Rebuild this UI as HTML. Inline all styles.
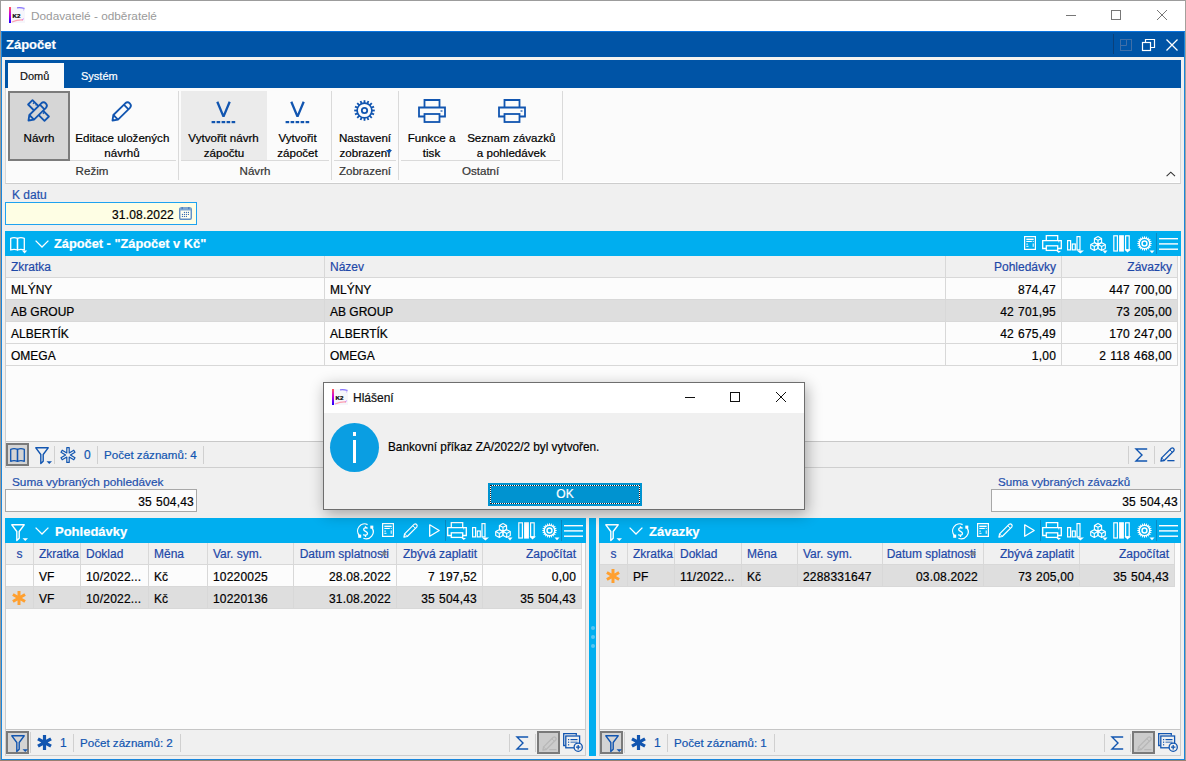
<!DOCTYPE html>
<html><head><meta charset="utf-8">
<style>
*{box-sizing:border-box}
html,body{margin:0;padding:0}
body{width:1186px;height:761px;position:relative;overflow:hidden;background:#f0f0f0;font-family:"Liberation Sans",sans-serif;font-size:12px;color:#000}
.a{position:absolute}
.t{position:absolute;white-space:nowrap;line-height:14px;-webkit-text-stroke:0.2px currentColor}
.r{text-align:right}
.n{letter-spacing:0.2px;word-spacing:0.6px}
.lbl{color:#1f51ad}
.hd{color:#1e48a8}
svg{position:absolute;overflow:visible}
</style></head><body>

<!-- desktop edges / window borders -->
<div class="a" style="left:0;top:0;width:1186px;height:1px;background:#9c9c9c"></div>
<div class="a" style="left:0;top:0;width:1px;height:761px;background:#a09a94"></div><div class="a" style="left:0;top:0;width:1px;height:31px;background:#9c9c9c"></div>
<div class="a" style="left:1185px;top:0;width:1px;height:761px;background:#a4a09c"></div>
<div class="a" style="left:0;top:760px;width:1186px;height:1px;background:#9a8070"></div>

<!-- outer title bar -->
<div class="a" style="left:1px;top:1px;width:1184px;height:30px;background:#fff"></div>
<svg style="left:9px;top:7px" width="16" height="16" viewBox="0 0 16 16"><defs><linearGradient id="k2g1" x1="0" y1="0" x2="0" y2="1"><stop offset="0" stop-color="#ff5a5a"/><stop offset="0.45" stop-color="#d000d8"/><stop offset="1" stop-color="#1a00ff"/></linearGradient></defs><rect x="0" y="0" width="16" height="16" fill="#f6f6fb"/><rect x="0" y="0" width="2" height="16" fill="url(#k2g1)"/><path d="M8 0.8Q12 0.3 15.5 1.5" stroke="#6a50ff" stroke-width="1.3" fill="none" opacity="0.8"/><path d="M15.3 2.5L14 3.2" stroke="#9a70ff" stroke-width="1" opacity="0.6"/><path d="M3 15Q9 12.5 14 13" stroke="#ff7a90" stroke-width="1.3" fill="none" opacity="0.7"/><path d="M14.5 11.5L13.5 13" stroke="#c060ff" stroke-width="1" opacity="0.7"/><text x="3.6" y="10.5" font-family="Liberation Sans" font-weight="700" font-size="6.2" fill="#000" stroke="#000" stroke-width="0.2">K2</text></svg>
<div class="t" style="left:31px;top:9px;color:#9a9a9a;font-size:11.8px;-webkit-text-stroke:0">Dodavatelé - odběratelé</div>
<div class="a" style="left:1066px;top:15px;width:10px;height:1px;background:#777"></div>
<div class="a" style="left:1111px;top:10px;width:10px;height:10px;border:1px solid #777"></div>
<svg style="left:1157px;top:10px" width="10" height="10"><path d="M0 0L10 10M10 0L0 10" stroke="#777" stroke-width="1"/></svg>

<!-- MDI child frame -->
<div class="a" style="left:1px;top:31px;width:1184px;height:729px;background:#1a86dc"></div>
<div class="a" style="left:2px;top:31px;width:1182px;height:728px;background:#f0f0f0"></div>
<div class="a" style="left:2px;top:31px;width:1182px;height:26px;background:#0054a6"></div>
<div class="a" style="left:1px;top:31px;width:1184px;height:1px;background:#0a74e0"></div>
<div class="t" style="left:6px;top:38px;color:#fff;font-weight:700;font-size:13px">Zápočet</div>
<div class="a" style="left:1113px;top:34px;width:1px;height:20px;background:#0a407a"></div>
<svg style="left:1120px;top:39px" width="12" height="12"><rect x="0.5" y="0.5" width="11" height="11" fill="none" stroke="#3f6fa8"/><path d="M6.5 0.5V6.5H0.5" fill="none" stroke="#3f6fa8"/></svg>
<svg style="left:1142px;top:39px" width="13" height="12"><rect x="0.5" y="3.5" width="8" height="8" fill="none" stroke="#fff" stroke-width="1.2"/><path d="M3.5 3.5V0.5H12.5V8.5H8.5" fill="none" stroke="#fff" stroke-width="1.2"/></svg>
<svg style="left:1166px;top:39px" width="12" height="12"><path d="M0.5 0.5L11.5 11.5M11.5 0.5L0.5 11.5" stroke="#fff" stroke-width="1.3"/></svg>

<div class="a" style="left:2px;top:57px;width:1182px;height:3px;background:#f5f3f0"></div>

<!-- ribbon -->
<div class="a" style="left:5px;top:60px;width:1176px;height:28px;background:#0054a6"></div>
<div class="a" style="left:8px;top:63px;width:56px;height:25px;background:#fbfbfb"></div>
<div class="t" style="left:20px;top:69px;color:#111;font-size:11px">Domů</div>
<div class="t" style="left:81px;top:69px;color:#fff;font-size:11px">Systém</div>
<div class="a" style="left:5px;top:88px;width:1176px;height:96px;background:#fbfbfb;border-left:1px solid #d8d8d8;border-right:1px solid #d8d8d8;border-bottom:1px solid #cdcdcd"></div>
<div class="a" style="left:6px;top:182px;width:1174px;height:1px;background:#fff"></div>

<!-- group separators -->
<div class="a" style="left:178px;top:91px;width:1px;height:89px;background:#dadada"></div>
<div class="a" style="left:331px;top:91px;width:1px;height:89px;background:#dadada"></div>
<div class="a" style="left:398px;top:91px;width:1px;height:89px;background:#dadada"></div>
<div class="a" style="left:562px;top:91px;width:1px;height:89px;background:#dadada"></div>
<div class="a" style="left:9px;top:160px;width:167px;height:1px;background:#dadada"></div>
<div class="a" style="left:181px;top:160px;width:148px;height:1px;background:#dadada"></div>
<div class="a" style="left:334px;top:160px;width:62px;height:1px;background:#dadada"></div>
<div class="a" style="left:401px;top:160px;width:159px;height:1px;background:#dadada"></div>

<!-- Návrh pressed -->
<div class="a" style="left:8px;top:91px;width:62px;height:70px;background:#d6d6d6;border:2px solid #7c7c7c"></div>
<svg style="left:27px;top:99px" width="24" height="24" viewBox="0 0 24 24" fill="none" stroke="#1155b0" stroke-width="1.8" stroke-linejoin="round">
 <path d="M5.5 1.1L1.1 5.5L17.5 21.9L21.9 17.5Z"/><path d="M7.6 3.2L6 4.8M9.7 5.3L8.6 6.4M15.4 11L14.3 12.1M17.5 13.1L15.9 14.7" stroke-width="1.3"/>
 <path d="M1.5 21.5L2.35 15.99L14.27 4.27A3.3 3.3 0 0 1 18.93 8.93L7.01 20.65Z" fill="#d6d6d6"/><path d="M12.86 5.68L17.52 10.34M2.35 15.99L7.01 20.65"/>
</svg>
<div class="t" style="left:-21.0px;top:131px;width:120px;text-align:center;font-size:11.6px">Návrh</div>

<!-- Editace -->
<svg style="left:111px;top:99px" width="24" height="24" viewBox="0 0 24 24" fill="none" stroke="#1155b0" stroke-width="1.8" stroke-linejoin="round">
 <path d="M1.5 21.5L2.35 15.99L14.27 4.27A3.3 3.3 0 0 1 18.93 8.93L7.01 20.65Z" fill="#fbfbfb"/><path d="M12.86 5.68L17.52 10.34M2.35 15.99L7.01 20.65"/>
</svg>
<div class="t" style="left:62.3px;top:131px;width:120px;text-align:center;font-size:11.6px">Editace uložených</div>
<div class="t" style="left:62.0px;top:146px;width:120px;text-align:center;font-size:11.6px">návrhů</div>
<div class="t" style="left:32.0px;top:164px;width:120px;text-align:center;font-size:11.6px;color:#333">Režim</div>

<!-- Vytvořit návrh zápočtu (hover) -->
<div class="a" style="left:181px;top:91px;width:86px;height:69px;background:#ebebeb"></div>
<svg style="left:211px;top:100px" width="25" height="25" viewBox="0 0 25 25"><path d="M6.3 1.8L12.5 16.6L18.7 1.8" fill="none" stroke="#1155b0" stroke-width="2.3" stroke-linejoin="bevel"/><rect x="0.6" y="21" width="3.6" height="2.2" fill="#1155b0"/><rect x="5.6" y="21" width="3.6" height="2.2" fill="#1155b0"/><rect x="10.6" y="21" width="3.6" height="2.2" fill="#1155b0"/><rect x="15.6" y="21" width="3.6" height="2.2" fill="#1155b0"/><rect x="20.6" y="21" width="3.6" height="2.2" fill="#1155b0"/></svg>
<div class="t" style="left:163.6px;top:131px;width:120px;text-align:center;font-size:11.6px">Vytvořit návrh</div>
<div class="t" style="left:164.0px;top:146px;width:120px;text-align:center;font-size:11.6px">zápočtu</div>
<svg style="left:285px;top:100px" width="25" height="25" viewBox="0 0 25 25"><path d="M6.3 1.8L12.5 16.6L18.7 1.8" fill="none" stroke="#1155b0" stroke-width="2.3" stroke-linejoin="bevel"/><rect x="0.6" y="21" width="3.6" height="2.2" fill="#1155b0"/><rect x="5.6" y="21" width="3.6" height="2.2" fill="#1155b0"/><rect x="10.6" y="21" width="3.6" height="2.2" fill="#1155b0"/><rect x="15.6" y="21" width="3.6" height="2.2" fill="#1155b0"/><rect x="20.6" y="21" width="3.6" height="2.2" fill="#1155b0"/></svg>
<div class="t" style="left:237.5px;top:131px;width:120px;text-align:center;font-size:11.6px">Vytvořit</div>
<div class="t" style="left:237.5px;top:146px;width:120px;text-align:center;font-size:11.6px">zápočet</div>
<div class="t" style="left:195.0px;top:164px;width:120px;text-align:center;font-size:11.6px;color:#333">Návrh</div>

<!-- Nastavení -->
<svg style="left:354px;top:100px" width="21" height="21" viewBox="0 0 21 21">
 <g fill="#1155b0"><rect x="9.6" y="0.2" width="1.8" height="3.2" transform="rotate(0.0 10.5 10.5)"/><rect x="9.6" y="0.2" width="1.8" height="3.2" transform="rotate(22.5 10.5 10.5)"/><rect x="9.6" y="0.2" width="1.8" height="3.2" transform="rotate(45.0 10.5 10.5)"/><rect x="9.6" y="0.2" width="1.8" height="3.2" transform="rotate(67.5 10.5 10.5)"/><rect x="9.6" y="0.2" width="1.8" height="3.2" transform="rotate(90.0 10.5 10.5)"/><rect x="9.6" y="0.2" width="1.8" height="3.2" transform="rotate(112.5 10.5 10.5)"/><rect x="9.6" y="0.2" width="1.8" height="3.2" transform="rotate(135.0 10.5 10.5)"/><rect x="9.6" y="0.2" width="1.8" height="3.2" transform="rotate(157.5 10.5 10.5)"/><rect x="9.6" y="0.2" width="1.8" height="3.2" transform="rotate(180.0 10.5 10.5)"/><rect x="9.6" y="0.2" width="1.8" height="3.2" transform="rotate(202.5 10.5 10.5)"/><rect x="9.6" y="0.2" width="1.8" height="3.2" transform="rotate(225.0 10.5 10.5)"/><rect x="9.6" y="0.2" width="1.8" height="3.2" transform="rotate(247.5 10.5 10.5)"/><rect x="9.6" y="0.2" width="1.8" height="3.2" transform="rotate(270.0 10.5 10.5)"/><rect x="9.6" y="0.2" width="1.8" height="3.2" transform="rotate(292.5 10.5 10.5)"/><rect x="9.6" y="0.2" width="1.8" height="3.2" transform="rotate(315.0 10.5 10.5)"/><rect x="9.6" y="0.2" width="1.8" height="3.2" transform="rotate(337.5 10.5 10.5)"/></g>
 <circle cx="10.5" cy="10.5" r="7.4" fill="none" stroke="#1155b0" stroke-width="1.7"/>
 <circle cx="10.5" cy="10.5" r="2.7" fill="none" stroke="#1155b0" stroke-width="1.8"/>
</svg>
<div class="t" style="left:305.0px;top:131px;width:120px;text-align:center;font-size:11.6px">Nastavení</div>
<div class="t" style="left:305.0px;top:146px;width:120px;text-align:center;font-size:11.6px">zobrazení</div>
<svg style="left:386px;top:150px" width="6" height="4"><path d="M0 0H6L3 4Z" fill="#1155b0"/></svg>
<div class="t" style="left:305.0px;top:164px;width:120px;text-align:center;font-size:11.6px;color:#333">Zobrazení</div>

<!-- printers -->
<svg style="left:418px;top:99px" width="28" height="24" viewBox="0 0 28 24" fill="none" stroke="#1155b0" stroke-width="1.8">
 <path d="M6.5 8.5V1H21.5V8.5"/><path d="M6.5 17.5H1V8.5H27V17.5H21.5"/><rect x="6.5" y="15" width="15" height="8"/><path d="M22.5 12h2" stroke-width="1.2"/>
</svg>
<div class="t" style="left:371.5px;top:131px;width:120px;text-align:center;font-size:11.6px">Funkce a</div>
<div class="t" style="left:371.5px;top:146px;width:120px;text-align:center;font-size:11.6px">tisk</div>
<svg style="left:498px;top:99px" width="28" height="24" viewBox="0 0 28 24" fill="none" stroke="#1155b0" stroke-width="1.8">
 <path d="M6.5 8.5V1H21.5V8.5"/><path d="M6.5 17.5H1V8.5H27V17.5H21.5"/><rect x="6.5" y="15" width="15" height="8"/><path d="M22.5 12h2" stroke-width="1.2"/>
</svg>
<div class="t" style="left:451.3px;top:131px;width:120px;text-align:center;font-size:11.6px">Seznam závazků</div>
<div class="t" style="left:451.3px;top:146px;width:120px;text-align:center;font-size:11.6px">a pohledávek</div>
<div class="t" style="left:420.6px;top:164px;width:120px;text-align:center;font-size:11.6px;color:#333">Ostatní</div>
<svg style="left:1166px;top:171px" width="10" height="6"><path d="M0.6 5.2L4.8 1.2L9 5.2" fill="none" stroke="#333" stroke-width="1.1"/></svg>

<!-- K datu -->
<div class="t lbl" style="left:12px;top:188px">K datu</div>
<div class="a" style="left:5px;top:202px;width:192px;height:23px;background:#fefee4;border:1px solid #1ea2f0"></div>
<div class="t r n" style="left:60px;top:208px;width:114px">31.08.2022</div>
<svg style="left:179px;top:207px" width="13" height="13" viewBox="0 0 13 13"><rect x="0.75" y="0.9" width="11.5" height="11.4" rx="1.3" fill="#fffff0" stroke="#5d8cc4" stroke-width="1.4"/><rect x="0.8" y="0.9" width="11.4" height="2.6" fill="#7ea6d2"/><rect x="2.6" y="0" width="1.2" height="2.2" fill="#4a7ab8"/><rect x="9.2" y="0" width="1.2" height="2.2" fill="#4a7ab8"/><g fill="#2f66b0"><circle cx="5.4" cy="5.4" r="0.6"/><circle cx="7.4" cy="5.4" r="0.6"/><circle cx="9.4" cy="5.4" r="0.6"/><circle cx="3.4" cy="7.4" r="0.6"/><circle cx="5.4" cy="7.4" r="0.6"/><circle cx="7.4" cy="7.4" r="0.6"/><circle cx="9.4" cy="7.4" r="0.6"/><circle cx="3.4" cy="9.4" r="0.6"/><circle cx="5.4" cy="9.4" r="0.6"/><circle cx="7.4" cy="9.4" r="0.6"/></g></svg>

<!-- Main panel -->
<div class="a" style="left:5px;top:231px;width:1176px;height:25px;background:#00aeef"></div>
<div class="t" style="left:54px;top:237px;color:#fff;font-weight:700;font-size:12.8px">Zápočet - "Zápočet v Kč"</div>
<div class="a" style="left:5px;top:256px;width:1176px;height:212px;background:#fcfcfc;border:1px solid #cfcfcf;border-top:0"></div>
<div class="a" style="left:6px;top:256px;width:1172px;height:21px;background:#f0f0f0"></div>
<div class="a" style="left:6px;top:277px;width:1172px;height:1px;background:#d8d8d8"></div>
<div class="a" style="left:6px;top:300px;width:1172px;height:21px;background:#dedede"></div>
<div class="a" style="left:6px;top:299px;width:1172px;height:1px;background:#d8d8d8"></div>
<div class="a" style="left:6px;top:321px;width:1172px;height:1px;background:#d8d8d8"></div>
<div class="a" style="left:6px;top:343px;width:1172px;height:1px;background:#d8d8d8"></div>
<div class="a" style="left:6px;top:365px;width:1172px;height:1px;background:#d8d8d8"></div>
<div class="a" style="left:324px;top:256px;width:1px;height:110px;background:#d8d8d8"></div>
<div class="a" style="left:945px;top:256px;width:1px;height:110px;background:#d8d8d8"></div>
<div class="a" style="left:1061px;top:256px;width:1px;height:110px;background:#d8d8d8"></div>
<div class="a" style="left:1177px;top:256px;width:1px;height:110px;background:#d8d8d8"></div>
<div class="t hd" style="left:11px;top:260px">Zkratka</div>
<div class="t hd" style="left:330px;top:260px">Název</div>
<div class="t hd r" style="left:946px;top:260px;width:110px">Pohledávky</div>
<div class="t hd r" style="left:1062px;top:260px;width:110px">Závazky</div>
<div class="t" style="left:11px;top:283px">MLÝNY</div><div class="t" style="left:330px;top:283px">MLÝNY</div>
<div class="t r n" style="left:946px;top:283px;width:110px">874,47</div><div class="t r n" style="left:1062px;top:283px;width:110px">447 700,00</div>
<div class="t" style="left:11px;top:305px">AB GROUP</div><div class="t" style="left:330px;top:305px">AB GROUP</div>
<div class="t r n" style="left:946px;top:305px;width:110px">42 701,95</div><div class="t r n" style="left:1062px;top:305px;width:110px">73 205,00</div>
<div class="t" style="left:11px;top:327px">ALBERTÍK</div><div class="t" style="left:330px;top:327px">ALBERTÍK</div>
<div class="t r n" style="left:946px;top:327px;width:110px">42 675,49</div><div class="t r n" style="left:1062px;top:327px;width:110px">170 247,00</div>
<div class="t" style="left:11px;top:349px">OMEGA</div><div class="t" style="left:330px;top:349px">OMEGA</div>
<div class="t r n" style="left:946px;top:349px;width:110px">1,00</div><div class="t r n" style="left:1062px;top:349px;width:110px">2 118 468,00</div>

<!-- main footer -->
<div class="a" style="left:5px;top:441px;width:1176px;height:27px;background:#f0f0f0;border:1px solid #cfcfcf;border-top-color:#c8c8c8"></div>
<div class="a" style="left:6px;top:443px;width:23px;height:23px;background:#d4d4d4;border:2px solid #7a7a7a"></div>
<div class="a" style="left:54px;top:446px;width:1px;height:18px;background:#d0d0d0"></div>
<div class="a" style="left:97px;top:446px;width:1px;height:18px;background:#d0d0d0"></div>
<div class="a" style="left:203px;top:446px;width:1px;height:18px;background:#d0d0d0"></div>
<div class="t" style="left:84px;top:448px;color:#1155b0">0</div>
<div class="t" style="left:104px;top:448px;color:#1155b0;font-size:11.6px">Počet záznamů: 4</div>
<div class="a" style="left:1128px;top:446px;width:1px;height:18px;background:#d0d0d0"></div>
<div class="a" style="left:1154px;top:446px;width:1px;height:18px;background:#d0d0d0"></div>

<!-- Suma -->
<div class="t lbl" style="left:12px;top:475px;font-size:11.8px">Suma vybraných pohledávek</div>
<div class="a" style="left:5px;top:489px;width:192px;height:23px;background:#fcfcfc;border:1px solid #a8a8a8"></div>
<div class="t r n" style="left:6px;top:495px;width:188px">35 504,43</div>
<div class="t lbl" style="left:998px;top:475px;font-size:11.6px">Suma vybraných závazků</div>
<div class="a" style="left:991px;top:489px;width:190px;height:23px;background:#fcfcfc;border:1px solid #a8a8a8"></div>
<div class="t r n" style="left:991px;top:495px;width:187px">35 504,43</div>

<!-- Pohledávky panel -->

<svg style="left:10px;top:237px;color:#fff;--bg:#00aeef" width="18" height="17" viewBox="0 0 18 17"><g fill="none" stroke="currentColor" stroke-width="1.3" stroke-linejoin="round"><path d="M0.7 1.3Q4 0 7.5 1.3V13Q4 11.8 0.7 13Z"/><path d="M7.5 1.3Q11 0 14.3 1.3V13Q11 11.8 7.5 13Z"/></g><path d="M12 13.6H17.2L14.6 16.4Z" fill="currentColor"/></svg>
<svg style="left:35px;top:240px;color:#fff;--bg:#00aeef" width="14" height="8" viewBox="0 0 14 8"><path d="M0.6 0.6L7 7L13.4 0.6" fill="none" stroke="currentColor" stroke-width="1.3"/></svg>
<svg style="left:1024px;top:236px;color:#fff;--bg:#00aeef" width="12" height="14" viewBox="0 0 12 14"><rect x="0.6" y="0.6" width="10.8" height="12.8" fill="none" stroke="currentColor" stroke-width="1.2"/><g fill="currentColor"><rect x="2.3" y="2.6" width="7.4" height="1.5"/><rect x="2.3" y="5" width="5.5" height="1"/><rect x="8.7" y="5" width="1" height="1"/><rect x="2.3" y="7.6" width="1.6" height="1"/><rect x="2.3" y="9.8" width="2.2" height="1"/><rect x="8.7" y="7.4" width="1" height="3.4"/></g></svg>
<svg style="left:1042px;top:235px;color:#fff;--bg:#00aeef" width="20" height="18" viewBox="0 0 20 18"><g fill="none" stroke="currentColor" stroke-width="1.3"><path d="M4.3 5.6V0.7H15.7V5.6"/><path d="M4.3 13.5H0.7V5.6H19.3V13.5H15.7"/><rect x="4.3" y="10.8" width="11.4" height="4.6"/></g><path d="M16 6.8h1.4" stroke="currentColor" stroke-width="0.8"/><path d="M14.5 16H19L16.75 18Z" fill="currentColor"/></svg>
<svg style="left:1067px;top:236px;color:#fff;--bg:#00aeef" width="18" height="18" viewBox="0 0 18 18"><g fill="none" stroke="currentColor" stroke-width="1.2"><rect x="0.6" y="4.6" width="3" height="9.3"/><rect x="5.3" y="8" width="3" height="5.9"/><rect x="10" y="0.6" width="3" height="13.3"/></g><path d="M9.8 14.6H17L13.4 17.6Z" fill="currentColor"/></svg>
<svg style="left:1090px;top:236px;color:#fff;--bg:#00aeef" width="18" height="18" viewBox="0 0 18 18"><g fill="none" stroke="currentColor" stroke-width="1.1" stroke-linejoin="round"><path d="M8 0.6L11.6 2.4V6.4L8 8.2L4.4 6.4V2.4Z M4.4 2.4L8 4.2L11.6 2.4 M8 4.2V8.2"/><path d="M4.3 6.8L7.9 8.6V12.6L4.3 14.4L0.7 12.6V8.6Z M0.7 8.6L4.3 10.4L7.9 8.6 M4.3 10.4V14.4"/><path d="M11.7 6.8L15.3 8.6V12.6L11.7 14.4L8.1 12.6V8.6Z M8.1 8.6L11.7 10.4L15.3 8.6 M11.7 10.4V14.4"/></g><path d="M12.5 14.6H17.5L15 17.4Z" fill="currentColor"/></svg>
<svg style="left:1113px;top:235px;color:#fff;--bg:#00aeef" width="19" height="18" viewBox="0 0 19 18"><g fill="none" stroke="currentColor" stroke-width="1.2"><rect x="0.8" y="0.8" width="3.6" height="15.2"/><rect x="12.6" y="0.8" width="3.6" height="14"/></g><rect x="6.1" y="0.2" width="4.8" height="16.4" fill="currentColor"/><path d="M11.5 14.6H18L14.4 17.6Z" fill="currentColor"/></svg>
<svg style="left:1137px;top:236px;color:#fff;--bg:#00aeef" width="19" height="18" viewBox="0 0 19 18"><g fill="currentColor"><rect x="7" y="0.3" width="1" height="2.4" transform="rotate(0 7.5 7.5)"/><rect x="7" y="0.3" width="1" height="2.4" transform="rotate(18 7.5 7.5)"/><rect x="7" y="0.3" width="1" height="2.4" transform="rotate(36 7.5 7.5)"/><rect x="7" y="0.3" width="1" height="2.4" transform="rotate(54 7.5 7.5)"/><rect x="7" y="0.3" width="1" height="2.4" transform="rotate(72 7.5 7.5)"/><rect x="7" y="0.3" width="1" height="2.4" transform="rotate(90 7.5 7.5)"/><rect x="7" y="0.3" width="1" height="2.4" transform="rotate(108 7.5 7.5)"/><rect x="7" y="0.3" width="1" height="2.4" transform="rotate(126 7.5 7.5)"/><rect x="7" y="0.3" width="1" height="2.4" transform="rotate(144 7.5 7.5)"/><rect x="7" y="0.3" width="1" height="2.4" transform="rotate(162 7.5 7.5)"/><rect x="7" y="0.3" width="1" height="2.4" transform="rotate(180 7.5 7.5)"/><rect x="7" y="0.3" width="1" height="2.4" transform="rotate(198 7.5 7.5)"/><rect x="7" y="0.3" width="1" height="2.4" transform="rotate(216 7.5 7.5)"/><rect x="7" y="0.3" width="1" height="2.4" transform="rotate(234 7.5 7.5)"/><rect x="7" y="0.3" width="1" height="2.4" transform="rotate(252 7.5 7.5)"/><rect x="7" y="0.3" width="1" height="2.4" transform="rotate(270 7.5 7.5)"/><rect x="7" y="0.3" width="1" height="2.4" transform="rotate(288 7.5 7.5)"/><rect x="7" y="0.3" width="1" height="2.4" transform="rotate(306 7.5 7.5)"/><rect x="7" y="0.3" width="1" height="2.4" transform="rotate(324 7.5 7.5)"/><rect x="7" y="0.3" width="1" height="2.4" transform="rotate(342 7.5 7.5)"/></g><circle cx="7.5" cy="7.5" r="5.3" fill="none" stroke="currentColor" stroke-width="1.5"/><circle cx="7.5" cy="7.5" r="2.45" fill="none" stroke="currentColor" stroke-width="1.5"/><path d="M12.5 14.5H17.5L15 17.3Z" fill="currentColor"/></svg>
<div class="a" style="left:1156px;top:233px;width:1px;height:21px;background:#0a8bc4"></div>
<svg style="left:1159px;top:238px;color:#fff;--bg:#00aeef" width="19" height="12" viewBox="0 0 19 12"><g fill="currentColor"><rect x="0" y="0" width="19" height="1.4"/><rect x="0" y="5.2" width="19" height="1.4"/><rect x="0" y="10.5" width="19" height="1.4"/></g></svg>
<svg style="left:10px;top:448px;color:#1155b0;--bg:#d4d4d4" width="16" height="15" viewBox="0 0 16 15"><g fill="none" stroke="currentColor" stroke-width="1.3" stroke-linejoin="round"><path d="M0.7 1.3Q4 0 7.5 1.3V13.3Q4 12 0.7 13.3Z"/><path d="M7.5 1.3Q11 0 14.3 1.3V13.3Q11 12 7.5 13.3Z"/></g></svg>
<svg style="left:35px;top:447px;color:#1155b0;--bg:#f0f0f0" width="18" height="18" viewBox="0 0 18 18"><path d="M0.8 0.8H13.2L8.2 7.5V14.2L5.8 16.5V7.5Z" fill="none" stroke="currentColor" stroke-width="1.4" stroke-linejoin="round"/><path d="M11.5 14.2H17L14.25 17Z" fill="currentColor"/></svg>
<svg style="left:60px;top:447px;color:#1155b0;--bg:#00aeef" width="16" height="16" viewBox="0 0 16 16"><g fill="none" stroke="currentColor" stroke-width="1.2" stroke-linejoin="round"><path d="M6.8 0.6H9.2V5.9L13.8 3.2L15 5.3L10.4 8L15 10.7L13.8 12.8L9.2 10.1V15.4H6.8V10.1L2.2 12.8L1 10.7L5.6 8L1 5.3L2.2 3.2L6.8 5.9Z"/></g></svg>
<svg style="left:1135px;top:448px;color:#1155b0;--bg:#00aeef" width="13" height="14" viewBox="0 0 13 14"><path d="M12.2 1H1L7 7L1 13H12.2" fill="none" stroke="currentColor" stroke-width="1.4" stroke-linejoin="miter"/></svg>
<svg style="left:1160px;top:447px;color:#1155b0;--bg:#00aeef" width="15" height="15" viewBox="0 0 15 15"><path d="M11.3 1.2a1.9 1.9 0 0 1 2.6 2.6L4.2 13.5L0.9 14.2L1.6 10.9Z" fill="none" stroke="currentColor" stroke-width="1.3" stroke-linejoin="round"/><path d="M9.8 2.7L12.4 5.3M1.6 10.9L4.2 13.5" fill="none" stroke="currentColor" stroke-width="1"/><rect x="7.3" y="13" width="7.2" height="1.3" fill="currentColor"/></svg>
<div class="a" style="left:5px;top:518px;width:581px;height:25px;background:#00aeef"></div>
<svg style="left:11px;top:524px;color:#fff;--bg:#00aeef" width="18" height="18" viewBox="0 0 18 18"><path d="M0.8 0.8H13.2L8.2 7.5V14.2L5.8 16.5V7.5Z" fill="none" stroke="currentColor" stroke-width="1.4" stroke-linejoin="round"/><path d="M11.5 14.2H17L14.25 17Z" fill="currentColor"/></svg>
<svg style="left:35px;top:527px;color:#fff;--bg:#00aeef" width="14" height="8" viewBox="0 0 14 8"><path d="M0.6 0.6L7 7L13.4 0.6" fill="none" stroke="currentColor" stroke-width="1.3"/></svg>
<div class="t" style="left:55px;top:525px;color:#fff;font-weight:700;font-size:13px">Pohledávky</div>
<svg style="left:356px;top:523px;color:#fff;--bg:#00aeef" width="19" height="19" viewBox="0 0 19 19"><g fill="none" stroke="currentColor" stroke-width="1.2"><path d="M11.6 1.6A7 7 0 0 0 3.4 12.6"/><path d="M7.4 15.2A7 7 0 0 0 15.8 4.6"/><path d="M11.6 5.4C10.6 4.4 7.5 4.5 7.7 6.6C7.9 8.6 11.5 8.1 11.5 10.4C11.5 12.5 8.4 12.6 7.3 11.5" stroke-width="1.3"/><path d="M9.5 3.2V5M9.5 12.1V13.9" stroke-width="1.3"/></g><path d="M2.2 11.6H5.2V14.8H2.2Z" fill="currentColor"/><path d="M14.3 2.6H17.3V5.6H14.3Z" fill="currentColor"/></svg>
<svg style="left:382px;top:523px;color:#fff;--bg:#00aeef" width="12" height="14" viewBox="0 0 12 14"><rect x="0.6" y="0.6" width="10.8" height="12.8" fill="none" stroke="currentColor" stroke-width="1.2"/><g fill="currentColor"><rect x="2.3" y="2.6" width="7.4" height="1.5"/><rect x="2.3" y="5" width="5.5" height="1"/><rect x="8.7" y="5" width="1" height="1"/><rect x="2.3" y="7.6" width="1.6" height="1"/><rect x="2.3" y="9.8" width="2.2" height="1"/><rect x="8.7" y="7.4" width="1" height="3.4"/></g></svg>
<svg style="left:403px;top:523px;color:#fff;--bg:#00aeef" width="15" height="15" viewBox="0 0 15 15"><path d="M11.3 1.2a1.9 1.9 0 0 1 2.6 2.6L4.2 13.5L0.9 14.2L1.6 10.9Z" fill="none" stroke="currentColor" stroke-width="1.2" stroke-linejoin="round"/><path d="M9.8 2.7L12.4 5.3M1.6 10.9L4.2 13.5" fill="none" stroke="currentColor" stroke-width="1"/></svg>
<svg style="left:429px;top:524px;color:#fff;--bg:#00aeef" width="11" height="13" viewBox="0 0 11 13"><path d="M0.7 0.8L10.2 6.5L0.7 12.2Z" fill="none" stroke="currentColor" stroke-width="1.3" stroke-linejoin="round"/></svg>
<div class="a" style="left:445px;top:520px;width:1px;height:21px;background:#0a8bc4"></div>
<svg style="left:447px;top:522px;color:#fff;--bg:#00aeef" width="20" height="18" viewBox="0 0 20 18"><g fill="none" stroke="currentColor" stroke-width="1.3"><path d="M4.3 5.6V0.7H15.7V5.6"/><path d="M4.3 13.5H0.7V5.6H19.3V13.5H15.7"/><rect x="4.3" y="10.8" width="11.4" height="4.6"/></g><path d="M16 6.8h1.4" stroke="currentColor" stroke-width="0.8"/><path d="M14.5 16H19L16.75 18Z" fill="currentColor"/></svg>
<svg style="left:472px;top:523px;color:#fff;--bg:#00aeef" width="18" height="18" viewBox="0 0 18 18"><g fill="none" stroke="currentColor" stroke-width="1.2"><rect x="0.6" y="4.6" width="3" height="9.3"/><rect x="5.3" y="8" width="3" height="5.9"/><rect x="10" y="0.6" width="3" height="13.3"/></g><path d="M9.8 14.6H17L13.4 17.6Z" fill="currentColor"/></svg>
<svg style="left:495px;top:523px;color:#fff;--bg:#00aeef" width="18" height="18" viewBox="0 0 18 18"><g fill="none" stroke="currentColor" stroke-width="1.1" stroke-linejoin="round"><path d="M8 0.6L11.6 2.4V6.4L8 8.2L4.4 6.4V2.4Z M4.4 2.4L8 4.2L11.6 2.4 M8 4.2V8.2"/><path d="M4.3 6.8L7.9 8.6V12.6L4.3 14.4L0.7 12.6V8.6Z M0.7 8.6L4.3 10.4L7.9 8.6 M4.3 10.4V14.4"/><path d="M11.7 6.8L15.3 8.6V12.6L11.7 14.4L8.1 12.6V8.6Z M8.1 8.6L11.7 10.4L15.3 8.6 M11.7 10.4V14.4"/></g><path d="M12.5 14.6H17.5L15 17.4Z" fill="currentColor"/></svg>
<svg style="left:518px;top:522px;color:#fff;--bg:#00aeef" width="19" height="18" viewBox="0 0 19 18"><g fill="none" stroke="currentColor" stroke-width="1.2"><rect x="0.8" y="0.8" width="3.6" height="15.2"/><rect x="12.6" y="0.8" width="3.6" height="14"/></g><rect x="6.1" y="0.2" width="4.8" height="16.4" fill="currentColor"/><path d="M11.5 14.6H18L14.4 17.6Z" fill="currentColor"/></svg>
<svg style="left:542px;top:523px;color:#fff;--bg:#00aeef" width="19" height="18" viewBox="0 0 19 18"><g fill="currentColor"><rect x="7" y="0.3" width="1" height="2.4" transform="rotate(0 7.5 7.5)"/><rect x="7" y="0.3" width="1" height="2.4" transform="rotate(18 7.5 7.5)"/><rect x="7" y="0.3" width="1" height="2.4" transform="rotate(36 7.5 7.5)"/><rect x="7" y="0.3" width="1" height="2.4" transform="rotate(54 7.5 7.5)"/><rect x="7" y="0.3" width="1" height="2.4" transform="rotate(72 7.5 7.5)"/><rect x="7" y="0.3" width="1" height="2.4" transform="rotate(90 7.5 7.5)"/><rect x="7" y="0.3" width="1" height="2.4" transform="rotate(108 7.5 7.5)"/><rect x="7" y="0.3" width="1" height="2.4" transform="rotate(126 7.5 7.5)"/><rect x="7" y="0.3" width="1" height="2.4" transform="rotate(144 7.5 7.5)"/><rect x="7" y="0.3" width="1" height="2.4" transform="rotate(162 7.5 7.5)"/><rect x="7" y="0.3" width="1" height="2.4" transform="rotate(180 7.5 7.5)"/><rect x="7" y="0.3" width="1" height="2.4" transform="rotate(198 7.5 7.5)"/><rect x="7" y="0.3" width="1" height="2.4" transform="rotate(216 7.5 7.5)"/><rect x="7" y="0.3" width="1" height="2.4" transform="rotate(234 7.5 7.5)"/><rect x="7" y="0.3" width="1" height="2.4" transform="rotate(252 7.5 7.5)"/><rect x="7" y="0.3" width="1" height="2.4" transform="rotate(270 7.5 7.5)"/><rect x="7" y="0.3" width="1" height="2.4" transform="rotate(288 7.5 7.5)"/><rect x="7" y="0.3" width="1" height="2.4" transform="rotate(306 7.5 7.5)"/><rect x="7" y="0.3" width="1" height="2.4" transform="rotate(324 7.5 7.5)"/><rect x="7" y="0.3" width="1" height="2.4" transform="rotate(342 7.5 7.5)"/></g><circle cx="7.5" cy="7.5" r="5.3" fill="none" stroke="currentColor" stroke-width="1.5"/><circle cx="7.5" cy="7.5" r="2.45" fill="none" stroke="currentColor" stroke-width="1.5"/><path d="M12.5 14.5H17.5L15 17.3Z" fill="currentColor"/></svg>
<div class="a" style="left:561px;top:520px;width:1px;height:21px;background:#0a8bc4"></div>
<svg style="left:564px;top:525px;color:#fff;--bg:#00aeef" width="19" height="12" viewBox="0 0 19 12"><g fill="currentColor"><rect x="0" y="0" width="19" height="1.4"/><rect x="0" y="5.2" width="19" height="1.4"/><rect x="0" y="10.5" width="19" height="1.4"/></g></svg>
<div class="a" style="left:5px;top:543px;width:581px;height:213px;background:#fcfcfc;border:1px solid #cdcdcd;border-top:0"></div>
<div class="a" style="left:6px;top:543px;width:576px;height:21px;background:#f0f0f0"></div>
<div class="a" style="left:6px;top:587px;width:576px;height:21px;background:#dedede"></div>
<div class="a" style="left:6px;top:564px;width:576px;height:1px;background:#d8d8d8"></div>
<div class="a" style="left:6px;top:586px;width:576px;height:1px;background:#d8d8d8"></div>
<div class="a" style="left:6px;top:608px;width:576px;height:1px;background:#d8d8d8"></div>
<div class="a" style="left:33px;top:543px;width:1px;height:66px;background:#d8d8d8"></div>
<div class="t hd" style="left:6px;top:547px;width:27px;text-align:center">s</div>
<div class="a" style="left:80px;top:543px;width:1px;height:66px;background:#d8d8d8"></div>
<div class="t hd" style="left:39px;top:547px">Zkratka</div>
<div class="a" style="left:148px;top:543px;width:1px;height:66px;background:#d8d8d8"></div>
<div class="t hd" style="left:86px;top:547px">Doklad</div>
<div class="a" style="left:207px;top:543px;width:1px;height:66px;background:#d8d8d8"></div>
<div class="t hd" style="left:154px;top:547px">Měna</div>
<div class="a" style="left:293px;top:543px;width:1px;height:66px;background:#d8d8d8"></div>
<div class="t hd" style="left:213px;top:547px">Var. sym.</div>
<div class="a" style="left:396px;top:543px;width:1px;height:66px;background:#d8d8d8"></div>
<div class="t hd r" style="left:294px;top:547px;width:95px">Datum splatnosti</div>
<div class="a" style="left:482px;top:543px;width:1px;height:66px;background:#d8d8d8"></div>
<div class="t hd r" style="left:397px;top:547px;width:80px">Zbývá zaplatit</div>
<div class="a" style="left:581px;top:543px;width:1px;height:66px;background:#d8d8d8"></div>
<div class="t hd r" style="left:483px;top:547px;width:93px">Započítat</div>
<div class="t" style="left:11px;top:570px"></div>
<div class="t" style="left:39px;top:570px">VF</div>
<div class="t n" style="left:86px;top:570px">10/2022...</div>
<div class="t" style="left:154px;top:570px">Kč</div>
<div class="t n" style="left:213px;top:570px">10220025</div>
<div class="t r n" style="left:294px;top:570px;width:97px">28.08.2022</div>
<div class="t r n" style="left:397px;top:570px;width:80px">7 197,52</div>
<div class="t r n" style="left:483px;top:570px;width:93px">0,00</div>
<svg style="left:12px;top:591px;color:#ffa030;--bg:#00aeef" width="14" height="14" viewBox="0 0 16 16"><g fill="currentColor"><path d="M6.3 0H9.7V5.1L14.1 2.6L15.8 5.5L11.4 8L15.8 10.5L14.1 13.4L9.7 10.9V16H6.3V10.9L1.9 13.4L0.2 10.5L4.6 8L0.2 5.5L1.9 2.6L6.3 5.1Z"/></g></svg>
<div class="t" style="left:39px;top:592px">VF</div>
<div class="t n" style="left:86px;top:592px">10/2022...</div>
<div class="t" style="left:154px;top:592px">Kč</div>
<div class="t n" style="left:213px;top:592px">10220136</div>
<div class="t r n" style="left:294px;top:592px;width:97px">31.08.2022</div>
<div class="t r n" style="left:397px;top:592px;width:80px">35 504,43</div>
<div class="t r n" style="left:483px;top:592px;width:93px">35 504,43</div>
<div class="a" style="left:5px;top:729px;width:581px;height:27px;background:#f0f0f0;border:1px solid #cdcdcd;border-top-color:#c6c6c6"></div>
<div class="a" style="left:6px;top:731px;width:23px;height:23px;background:#d4d4d4;border:2px solid #7a7a7a"></div>
<svg style="left:11px;top:735px;color:#1155b0;--bg:#d4d4d4" width="18" height="18" viewBox="0 0 18 18"><path d="M0.8 0.8H13.2L8.2 7.5V14.2L5.8 16.5V7.5Z" fill="none" stroke="currentColor" stroke-width="1.4" stroke-linejoin="round"/><path d="M11.5 14.2H17L14.25 17Z" fill="currentColor"/></svg>
<svg style="left:37px;top:735px;color:#1155b0;--bg:#00aeef" width="15" height="15" viewBox="0 0 16 16"><g fill="currentColor"><path d="M6.3 0H9.7V5.1L14.1 2.6L15.8 5.5L11.4 8L15.8 10.5L14.1 13.4L9.7 10.9V16H6.3V10.9L1.9 13.4L0.2 10.5L4.6 8L0.2 5.5L1.9 2.6L6.3 5.1Z"/></g></svg>
<div class="t" style="left:60px;top:736px;color:#1155b0">1</div>
<div class="a" style="left:30px;top:732px;width:1px;height:21px;background:#d0d0d0"></div>
<div class="a" style="left:73px;top:734px;width:1px;height:18px;background:#d0d0d0"></div>
<div class="t" style="left:80px;top:736px;color:#1155b0;font-size:11.6px">Počet záznamů: 2</div>
<div class="a" style="left:180px;top:734px;width:1px;height:18px;background:#d0d0d0"></div>
<div class="a" style="left:509px;top:734px;width:1px;height:18px;background:#d0d0d0"></div>
<svg style="left:516px;top:736px;color:#1155b0;--bg:#00aeef" width="13" height="14" viewBox="0 0 13 14"><path d="M12.2 1H1L7 7L1 13H12.2" fill="none" stroke="currentColor" stroke-width="1.4" stroke-linejoin="miter"/></svg>
<div class="a" style="left:535px;top:734px;width:1px;height:18px;background:#d0d0d0"></div>
<div class="a" style="left:537px;top:731px;width:23px;height:23px;background:#cccccc;border:2px solid #7a7a7a"></div>
<svg style="left:542px;top:736px;color:#b8b8b8;--bg:#00aeef" width="15" height="15" viewBox="0 0 15 15"><path d="M11.3 1.2a1.9 1.9 0 0 1 2.6 2.6L4.2 13.5L0.9 14.2L1.6 10.9Z" fill="none" stroke="currentColor" stroke-width="1.3" stroke-linejoin="round"/><path d="M9.8 2.7L12.4 5.3M1.6 10.9L4.2 13.5" fill="none" stroke="currentColor" stroke-width="1"/><rect x="7.3" y="13" width="7.2" height="1.3" fill="currentColor"/></svg>
<svg style="left:563px;top:733px;color:#1155b0;--bg:#00aeef" width="20" height="19" viewBox="0 0 20 19"><g fill="none" stroke="currentColor" stroke-width="1.3"><path d="M2.5 12.5H0.7V0.7H13.3V2.5"/><rect x="2.8" y="3" width="13.8" height="11.8" fill="#f0f0f0"/></g><g fill="currentColor"><rect x="5" y="6" width="1.2" height="1.2"/><rect x="5" y="8.6" width="1.2" height="1.2"/><rect x="5" y="11.2" width="1.2" height="1.2"/><rect x="7.5" y="6" width="7" height="1.2"/><rect x="7.5" y="8.6" width="7" height="1.2" opacity="0.7"/></g><circle cx="15.2" cy="14.2" r="4.1" fill="#f0f0f0" stroke="currentColor" stroke-width="1.3"/><path d="M15.2 12V16.4M13 14.2H17.4" stroke="currentColor" stroke-width="1.3"/></svg>
<div class="a" style="left:599px;top:518px;width:582px;height:25px;background:#00aeef"></div>
<svg style="left:605px;top:524px;color:#fff;--bg:#00aeef" width="18" height="18" viewBox="0 0 18 18"><path d="M0.8 0.8H13.2L8.2 7.5V14.2L5.8 16.5V7.5Z" fill="none" stroke="currentColor" stroke-width="1.4" stroke-linejoin="round"/><path d="M11.5 14.2H17L14.25 17Z" fill="currentColor"/></svg>
<svg style="left:629px;top:527px;color:#fff;--bg:#00aeef" width="14" height="8" viewBox="0 0 14 8"><path d="M0.6 0.6L7 7L13.4 0.6" fill="none" stroke="currentColor" stroke-width="1.3"/></svg>
<div class="t" style="left:649px;top:525px;color:#fff;font-weight:700;font-size:13px">Závazky</div>
<svg style="left:951px;top:523px;color:#fff;--bg:#00aeef" width="19" height="19" viewBox="0 0 19 19"><g fill="none" stroke="currentColor" stroke-width="1.2"><path d="M11.6 1.6A7 7 0 0 0 3.4 12.6"/><path d="M7.4 15.2A7 7 0 0 0 15.8 4.6"/><path d="M11.6 5.4C10.6 4.4 7.5 4.5 7.7 6.6C7.9 8.6 11.5 8.1 11.5 10.4C11.5 12.5 8.4 12.6 7.3 11.5" stroke-width="1.3"/><path d="M9.5 3.2V5M9.5 12.1V13.9" stroke-width="1.3"/></g><path d="M2.2 11.6H5.2V14.8H2.2Z" fill="currentColor"/><path d="M14.3 2.6H17.3V5.6H14.3Z" fill="currentColor"/></svg>
<svg style="left:977px;top:523px;color:#fff;--bg:#00aeef" width="12" height="14" viewBox="0 0 12 14"><rect x="0.6" y="0.6" width="10.8" height="12.8" fill="none" stroke="currentColor" stroke-width="1.2"/><g fill="currentColor"><rect x="2.3" y="2.6" width="7.4" height="1.5"/><rect x="2.3" y="5" width="5.5" height="1"/><rect x="8.7" y="5" width="1" height="1"/><rect x="2.3" y="7.6" width="1.6" height="1"/><rect x="2.3" y="9.8" width="2.2" height="1"/><rect x="8.7" y="7.4" width="1" height="3.4"/></g></svg>
<svg style="left:998px;top:523px;color:#fff;--bg:#00aeef" width="15" height="15" viewBox="0 0 15 15"><path d="M11.3 1.2a1.9 1.9 0 0 1 2.6 2.6L4.2 13.5L0.9 14.2L1.6 10.9Z" fill="none" stroke="currentColor" stroke-width="1.2" stroke-linejoin="round"/><path d="M9.8 2.7L12.4 5.3M1.6 10.9L4.2 13.5" fill="none" stroke="currentColor" stroke-width="1"/></svg>
<svg style="left:1024px;top:524px;color:#fff;--bg:#00aeef" width="11" height="13" viewBox="0 0 11 13"><path d="M0.7 0.8L10.2 6.5L0.7 12.2Z" fill="none" stroke="currentColor" stroke-width="1.3" stroke-linejoin="round"/></svg>
<div class="a" style="left:1040px;top:520px;width:1px;height:21px;background:#0a8bc4"></div>
<svg style="left:1042px;top:522px;color:#fff;--bg:#00aeef" width="20" height="18" viewBox="0 0 20 18"><g fill="none" stroke="currentColor" stroke-width="1.3"><path d="M4.3 5.6V0.7H15.7V5.6"/><path d="M4.3 13.5H0.7V5.6H19.3V13.5H15.7"/><rect x="4.3" y="10.8" width="11.4" height="4.6"/></g><path d="M16 6.8h1.4" stroke="currentColor" stroke-width="0.8"/><path d="M14.5 16H19L16.75 18Z" fill="currentColor"/></svg>
<svg style="left:1067px;top:523px;color:#fff;--bg:#00aeef" width="18" height="18" viewBox="0 0 18 18"><g fill="none" stroke="currentColor" stroke-width="1.2"><rect x="0.6" y="4.6" width="3" height="9.3"/><rect x="5.3" y="8" width="3" height="5.9"/><rect x="10" y="0.6" width="3" height="13.3"/></g><path d="M9.8 14.6H17L13.4 17.6Z" fill="currentColor"/></svg>
<svg style="left:1090px;top:523px;color:#fff;--bg:#00aeef" width="18" height="18" viewBox="0 0 18 18"><g fill="none" stroke="currentColor" stroke-width="1.1" stroke-linejoin="round"><path d="M8 0.6L11.6 2.4V6.4L8 8.2L4.4 6.4V2.4Z M4.4 2.4L8 4.2L11.6 2.4 M8 4.2V8.2"/><path d="M4.3 6.8L7.9 8.6V12.6L4.3 14.4L0.7 12.6V8.6Z M0.7 8.6L4.3 10.4L7.9 8.6 M4.3 10.4V14.4"/><path d="M11.7 6.8L15.3 8.6V12.6L11.7 14.4L8.1 12.6V8.6Z M8.1 8.6L11.7 10.4L15.3 8.6 M11.7 10.4V14.4"/></g><path d="M12.5 14.6H17.5L15 17.4Z" fill="currentColor"/></svg>
<svg style="left:1113px;top:522px;color:#fff;--bg:#00aeef" width="19" height="18" viewBox="0 0 19 18"><g fill="none" stroke="currentColor" stroke-width="1.2"><rect x="0.8" y="0.8" width="3.6" height="15.2"/><rect x="12.6" y="0.8" width="3.6" height="14"/></g><rect x="6.1" y="0.2" width="4.8" height="16.4" fill="currentColor"/><path d="M11.5 14.6H18L14.4 17.6Z" fill="currentColor"/></svg>
<svg style="left:1137px;top:523px;color:#fff;--bg:#00aeef" width="19" height="18" viewBox="0 0 19 18"><g fill="currentColor"><rect x="7" y="0.3" width="1" height="2.4" transform="rotate(0 7.5 7.5)"/><rect x="7" y="0.3" width="1" height="2.4" transform="rotate(18 7.5 7.5)"/><rect x="7" y="0.3" width="1" height="2.4" transform="rotate(36 7.5 7.5)"/><rect x="7" y="0.3" width="1" height="2.4" transform="rotate(54 7.5 7.5)"/><rect x="7" y="0.3" width="1" height="2.4" transform="rotate(72 7.5 7.5)"/><rect x="7" y="0.3" width="1" height="2.4" transform="rotate(90 7.5 7.5)"/><rect x="7" y="0.3" width="1" height="2.4" transform="rotate(108 7.5 7.5)"/><rect x="7" y="0.3" width="1" height="2.4" transform="rotate(126 7.5 7.5)"/><rect x="7" y="0.3" width="1" height="2.4" transform="rotate(144 7.5 7.5)"/><rect x="7" y="0.3" width="1" height="2.4" transform="rotate(162 7.5 7.5)"/><rect x="7" y="0.3" width="1" height="2.4" transform="rotate(180 7.5 7.5)"/><rect x="7" y="0.3" width="1" height="2.4" transform="rotate(198 7.5 7.5)"/><rect x="7" y="0.3" width="1" height="2.4" transform="rotate(216 7.5 7.5)"/><rect x="7" y="0.3" width="1" height="2.4" transform="rotate(234 7.5 7.5)"/><rect x="7" y="0.3" width="1" height="2.4" transform="rotate(252 7.5 7.5)"/><rect x="7" y="0.3" width="1" height="2.4" transform="rotate(270 7.5 7.5)"/><rect x="7" y="0.3" width="1" height="2.4" transform="rotate(288 7.5 7.5)"/><rect x="7" y="0.3" width="1" height="2.4" transform="rotate(306 7.5 7.5)"/><rect x="7" y="0.3" width="1" height="2.4" transform="rotate(324 7.5 7.5)"/><rect x="7" y="0.3" width="1" height="2.4" transform="rotate(342 7.5 7.5)"/></g><circle cx="7.5" cy="7.5" r="5.3" fill="none" stroke="currentColor" stroke-width="1.5"/><circle cx="7.5" cy="7.5" r="2.45" fill="none" stroke="currentColor" stroke-width="1.5"/><path d="M12.5 14.5H17.5L15 17.3Z" fill="currentColor"/></svg>
<div class="a" style="left:1156px;top:520px;width:1px;height:21px;background:#0a8bc4"></div>
<svg style="left:1159px;top:525px;color:#fff;--bg:#00aeef" width="19" height="12" viewBox="0 0 19 12"><g fill="currentColor"><rect x="0" y="0" width="19" height="1.4"/><rect x="0" y="5.2" width="19" height="1.4"/><rect x="0" y="10.5" width="19" height="1.4"/></g></svg>
<div class="a" style="left:599px;top:543px;width:582px;height:213px;background:#fcfcfc;border:1px solid #cdcdcd;border-top:0"></div>
<div class="a" style="left:600px;top:543px;width:575px;height:21px;background:#f0f0f0"></div>
<div class="a" style="left:600px;top:565px;width:575px;height:21px;background:#dedede"></div>
<div class="a" style="left:600px;top:564px;width:575px;height:1px;background:#d8d8d8"></div>
<div class="a" style="left:600px;top:586px;width:575px;height:1px;background:#d8d8d8"></div>
<div class="a" style="left:627px;top:543px;width:1px;height:44px;background:#d8d8d8"></div>
<div class="t hd" style="left:600px;top:547px;width:27px;text-align:center">s</div>
<div class="a" style="left:674px;top:543px;width:1px;height:44px;background:#d8d8d8"></div>
<div class="t hd" style="left:633px;top:547px">Zkratka</div>
<div class="a" style="left:741px;top:543px;width:1px;height:44px;background:#d8d8d8"></div>
<div class="t hd" style="left:680px;top:547px">Doklad</div>
<div class="a" style="left:797px;top:543px;width:1px;height:44px;background:#d8d8d8"></div>
<div class="t hd" style="left:747px;top:547px">Měna</div>
<div class="a" style="left:882px;top:543px;width:1px;height:44px;background:#d8d8d8"></div>
<div class="t hd" style="left:803px;top:547px">Var. sym.</div>
<div class="a" style="left:983px;top:543px;width:1px;height:44px;background:#d8d8d8"></div>
<div class="t hd r" style="left:883px;top:547px;width:93px">Datum splatnosti</div>
<div class="a" style="left:1079px;top:543px;width:1px;height:44px;background:#d8d8d8"></div>
<div class="t hd r" style="left:984px;top:547px;width:90px">Zbývá zaplatit</div>
<div class="a" style="left:1174px;top:543px;width:1px;height:44px;background:#d8d8d8"></div>
<div class="t hd r" style="left:1080px;top:547px;width:89px">Započítat</div>
<svg style="left:606px;top:569px;color:#ffa030;--bg:#00aeef" width="14" height="14" viewBox="0 0 16 16"><g fill="currentColor"><path d="M6.3 0H9.7V5.1L14.1 2.6L15.8 5.5L11.4 8L15.8 10.5L14.1 13.4L9.7 10.9V16H6.3V10.9L1.9 13.4L0.2 10.5L4.6 8L0.2 5.5L1.9 2.6L6.3 5.1Z"/></g></svg>
<div class="t" style="left:633px;top:570px">PF</div>
<div class="t n" style="left:680px;top:570px">11/2022...</div>
<div class="t" style="left:747px;top:570px">Kč</div>
<div class="t n" style="left:803px;top:570px">2288331647</div>
<div class="t r n" style="left:883px;top:570px;width:95px">03.08.2022</div>
<div class="t r n" style="left:984px;top:570px;width:90px">73 205,00</div>
<div class="t r n" style="left:1080px;top:570px;width:89px">35 504,43</div>
<div class="a" style="left:599px;top:729px;width:582px;height:27px;background:#f0f0f0;border:1px solid #cdcdcd;border-top-color:#c6c6c6"></div>
<div class="a" style="left:600px;top:731px;width:23px;height:23px;background:#d4d4d4;border:2px solid #7a7a7a"></div>
<svg style="left:605px;top:735px;color:#1155b0;--bg:#d4d4d4" width="18" height="18" viewBox="0 0 18 18"><path d="M0.8 0.8H13.2L8.2 7.5V14.2L5.8 16.5V7.5Z" fill="none" stroke="currentColor" stroke-width="1.4" stroke-linejoin="round"/><path d="M11.5 14.2H17L14.25 17Z" fill="currentColor"/></svg>
<svg style="left:631px;top:735px;color:#1155b0;--bg:#00aeef" width="15" height="15" viewBox="0 0 16 16"><g fill="currentColor"><path d="M6.3 0H9.7V5.1L14.1 2.6L15.8 5.5L11.4 8L15.8 10.5L14.1 13.4L9.7 10.9V16H6.3V10.9L1.9 13.4L0.2 10.5L4.6 8L0.2 5.5L1.9 2.6L6.3 5.1Z"/></g></svg>
<div class="t" style="left:654px;top:736px;color:#1155b0">1</div>
<div class="a" style="left:624px;top:732px;width:1px;height:21px;background:#d0d0d0"></div>
<div class="a" style="left:667px;top:734px;width:1px;height:18px;background:#d0d0d0"></div>
<div class="t" style="left:674px;top:736px;color:#1155b0;font-size:11.6px">Počet záznamů: 1</div>
<div class="a" style="left:774px;top:734px;width:1px;height:18px;background:#d0d0d0"></div>
<div class="a" style="left:1104px;top:734px;width:1px;height:18px;background:#d0d0d0"></div>
<svg style="left:1111px;top:736px;color:#1155b0;--bg:#00aeef" width="13" height="14" viewBox="0 0 13 14"><path d="M12.2 1H1L7 7L1 13H12.2" fill="none" stroke="currentColor" stroke-width="1.4" stroke-linejoin="miter"/></svg>
<div class="a" style="left:1130px;top:734px;width:1px;height:18px;background:#d0d0d0"></div>
<div class="a" style="left:1132px;top:731px;width:23px;height:23px;background:#cccccc;border:2px solid #7a7a7a"></div>
<svg style="left:1137px;top:736px;color:#b8b8b8;--bg:#00aeef" width="15" height="15" viewBox="0 0 15 15"><path d="M11.3 1.2a1.9 1.9 0 0 1 2.6 2.6L4.2 13.5L0.9 14.2L1.6 10.9Z" fill="none" stroke="currentColor" stroke-width="1.3" stroke-linejoin="round"/><path d="M9.8 2.7L12.4 5.3M1.6 10.9L4.2 13.5" fill="none" stroke="currentColor" stroke-width="1"/><rect x="7.3" y="13" width="7.2" height="1.3" fill="currentColor"/></svg>
<svg style="left:1158px;top:733px;color:#1155b0;--bg:#00aeef" width="20" height="19" viewBox="0 0 20 19"><g fill="none" stroke="currentColor" stroke-width="1.3"><path d="M2.5 12.5H0.7V0.7H13.3V2.5"/><rect x="2.8" y="3" width="13.8" height="11.8" fill="#f0f0f0"/></g><g fill="currentColor"><rect x="5" y="6" width="1.2" height="1.2"/><rect x="5" y="8.6" width="1.2" height="1.2"/><rect x="5" y="11.2" width="1.2" height="1.2"/><rect x="7.5" y="6" width="7" height="1.2"/><rect x="7.5" y="8.6" width="7" height="1.2" opacity="0.7"/></g><circle cx="15.2" cy="14.2" r="4.1" fill="#f0f0f0" stroke="currentColor" stroke-width="1.3"/><path d="M15.2 12V16.4M13 14.2H17.4" stroke="currentColor" stroke-width="1.3"/></svg>
<svg style="left:381px;top:551px" width="6" height="5"><path d="M3 0.3V4.7M0.5 1.2L5.5 3.8M0.5 3.8L5.5 1.2" stroke="#808080" stroke-width="1.2"/></svg>
<svg style="left:970px;top:551px" width="6" height="5"><path d="M3 0.3V4.7M0.5 1.2L5.5 3.8M0.5 3.8L5.5 1.2" stroke="#808080" stroke-width="1.2"/></svg>
<div class="a" style="left:589px;top:518px;width:7px;height:238px;background:#00aeef"></div>
<div class="a" style="left:590.5px;top:625.5px;width:4px;height:4px;border-radius:50%;background:#58c6f2"></div>
<div class="a" style="left:590.5px;top:634.5px;width:4px;height:4px;border-radius:50%;background:#58c6f2"></div>
<div class="a" style="left:590.5px;top:643.5px;width:4px;height:4px;border-radius:50%;background:#58c6f2"></div>
<!-- dialog -->
<div class="a" style="left:323px;top:382px;width:482px;height:128px;background:#f0f0f0;border:1px solid #6e6e6e;box-shadow:2px 4px 14px rgba(0,0,0,0.32)"></div>
<div class="a" style="left:324px;top:383px;width:480px;height:30px;background:#fff"></div>
<svg style="left:332px;top:389px" width="16" height="16" viewBox="0 0 16 16"><defs><linearGradient id="k2g52" x1="0" y1="0" x2="0" y2="1"><stop offset="0" stop-color="#ff5a5a"/><stop offset="0.45" stop-color="#d000d8"/><stop offset="1" stop-color="#1a00ff"/></linearGradient></defs><rect x="0" y="0" width="16" height="16" fill="#f6f6fb"/><rect x="0" y="0" width="2" height="16" fill="url(#k2g52)"/><path d="M8 0.8Q12 0.3 15.5 1.5" stroke="#6a50ff" stroke-width="1.3" fill="none" opacity="0.8"/><path d="M15.3 2.5L14 3.2" stroke="#9a70ff" stroke-width="1" opacity="0.6"/><path d="M3 15Q9 12.5 14 13" stroke="#ff7a90" stroke-width="1.3" fill="none" opacity="0.7"/><path d="M14.5 11.5L13.5 13" stroke="#c060ff" stroke-width="1" opacity="0.7"/><text x="3.6" y="10.5" font-family="Liberation Sans" font-weight="700" font-size="6.2" fill="#000" stroke="#000" stroke-width="0.2">K2</text></svg>
<div class="t" style="left:353px;top:391px;color:#111">Hlášení</div>
<div class="a" style="left:685px;top:397px;width:10px;height:1px;background:#111"></div>
<div class="a" style="left:730px;top:392px;width:10px;height:10px;border:1px solid #111"></div>
<svg style="left:776px;top:392px" width="10" height="10"><path d="M0 0L10 10M10 0L0 10" stroke="#111" stroke-width="1"/></svg>
<div class="a" style="left:330px;top:423px;width:49px;height:49px;border-radius:50%;background:#0a9ee2"></div>
<div class="a" style="left:353px;top:432px;width:3px;height:4px;background:#fff"></div>
<div class="a" style="left:353px;top:440px;width:3px;height:23px;background:#fff"></div>
<div class="t" style="left:388px;top:440px;color:#000;font-size:12.8px;transform:scaleX(0.92);transform-origin:0 0">Bankovní příkaz ZA/2022/2 byl vytvořen.</div>
<div class="a" style="left:488px;top:483px;width:154px;height:23px;background:#0093d0"></div>
<div class="a" style="left:490px;top:485px;width:150px;height:19px;border:1px solid #fff"></div><div class="a" style="left:490px;top:485px;width:150px;height:19px;border:1px dotted #222"></div>
<div class="t" style="left:488px;top:487px;width:154px;text-align:center;color:#fff">OK</div>

</body></html>
